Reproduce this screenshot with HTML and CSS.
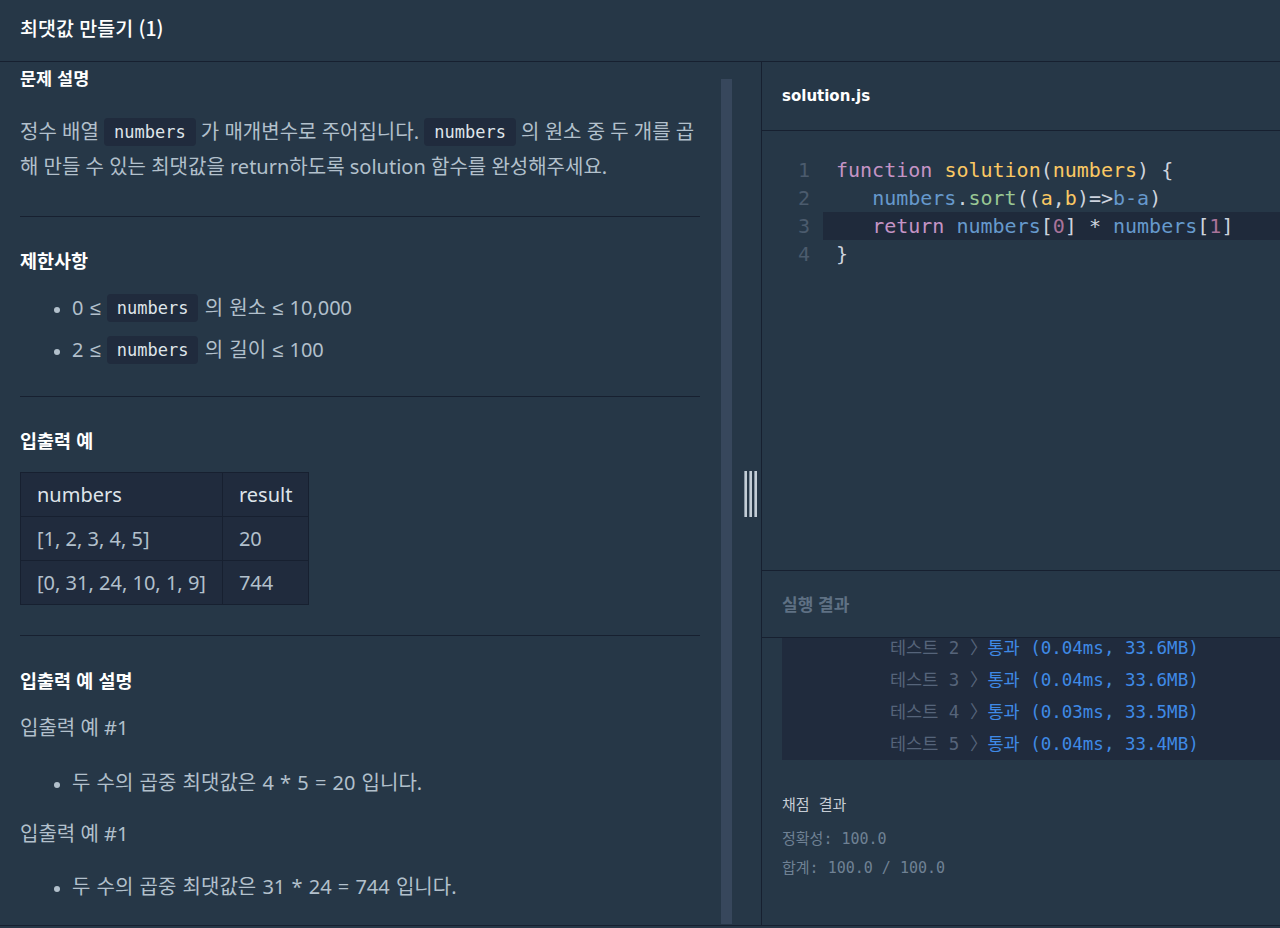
FILE: index.html
```html
<!DOCTYPE html>
<html lang="ko">
<head>
<meta charset="utf-8">
<title>최댓값 만들기 (1)</title>
<link rel="stylesheet" href="styles.css">
</head>
<body>
<header class="topbar">
  <h1 class="title">최댓값 만들기 (1)</h1>
</header>
<main class="workspace">
  <section class="left">
    <div class="desc">
      <h2 class="panel-title">문제 설명</h2>
      <p class="para">정수 배열 <code class="ic">numbers</code> 가 매개변수로 주어집니다. <code class="ic">numbers</code> 의 원소 중 두 개를 곱해 만들 수 있는 최댓값을 return하도록 solution 함수를 완성해주세요.</p>
      <hr class="rule rule-a">
      <h3 class="sub">제한사항</h3>
      <ul class="bullets spaced b-constraints">
        <li>0 <span class="op">≤</span> <code class="ic">numbers</code> 의 원소 <span class="op">≤</span> 10,000</li>
        <li>2 <span class="op">≤</span> <code class="ic">numbers</code> 의 길이 <span class="op">≤</span> 100</li>
      </ul>
      <hr class="rule rule-b">
      <h3 class="sub">입출력 예</h3>
      <table class="io">
        <thead>
          <tr><th>numbers</th><th>result</th></tr>
        </thead>
        <tbody>
          <tr><td>[1, 2, 3, 4, 5]</td><td>20</td></tr>
          <tr><td>[0, 31, 24, 10, 1, 9]</td><td>744</td></tr>
        </tbody>
      </table>
      <hr class="rule rule-c">
      <h3 class="sub sub-last">입출력 예 설명</h3>
      <p class="ex ex-1">입출력 예 #1</p>
      <ul class="bullets spaced b-ex1">
        <li>두 수의 곱중 최댓값은 4 * 5 = 20 입니다.</li>
      </ul>
      <p class="ex ex-2">입출력 예 #1</p>
      <ul class="bullets spaced b-ex2">
        <li>두 수의 곱중 최댓값은 31 * 24 = 744 입니다.</li>
      </ul>
    </div>
    <div class="scrollbar"><div class="thumb"></div></div>
    <div class="splitter">
      <div class="handle"><span></span><span></span><span></span></div>
    </div>
  </section>
  <section class="right">
    <div class="tab">solution.js</div>
    <div class="editor">
      <div class="nums">
        <div>1</div><div>2</div><div>3</div><div>4</div>
      </div>
      <div class="code">
        <div class="ln"><span class="kw">function</span> <span class="fn">solution</span><span class="pn">(</span><span class="pa">numbers</span><span class="pn">) {</span></div>
        <div class="ln">   <span class="vr">numbers</span><span class="pn">.</span><span class="pr">sort</span><span class="pn">((</span><span class="pa">a</span><span class="pn">,</span><span class="pa">b</span><span class="pn">)=&gt;</span><span class="vr">b-a</span><span class="pn">)</span></div>
        <div class="ln active">   <span class="kw">return</span> <span class="vr">numbers</span><span class="pn">[</span><span class="nm">0</span><span class="pn">] * </span><span class="vr">numbers</span><span class="pn">[</span><span class="nm">1</span><span class="pn">]</span></div>
        <div class="ln"><span class="pn">}</span></div>
      </div>
    </div>
    <div class="run-head">실행 결과</div>
    <div class="run-body">
      <div class="console">
        <div class="tline"><span class="tl">테스트 2 〉</span><span class="ts">통과 (0.04ms, 33.6MB)</span></div>
        <div class="tline"><span class="tl">테스트 3 〉</span><span class="ts">통과 (0.04ms, 33.6MB)</span></div>
        <div class="tline"><span class="tl">테스트 4 〉</span><span class="ts">통과 (0.03ms, 33.5MB)</span></div>
        <div class="tline"><span class="tl">테스트 5 〉</span><span class="ts">통과 (0.04ms, 33.4MB)</span></div>
      </div>
    </div>
    <div class="grade">
      <div class="grade-title">채점 결과</div>
      <div class="grade-line first">정확성: 100.0</div>
      <div class="grade-line">합계: 100.0 / 100.0</div>
    </div>
  </section>
</main>
<div class="footer"></div>
</body>
</html>
```

FILE: styles.css
```css
html, body {
  margin: 0;
  padding: 0;
}

body {
  width: 1280px;
  height: 928px;
  overflow: hidden;
  background: #263747;
  color: #b2c0cc;
  font-family: "Noto Sans", "Noto Sans CJK KR", sans-serif;
  font-size: 20px;
}

/* top bar */
.topbar {
  height: 62px;
  box-sizing: border-box;
  padding: 0 0 7px 20px;
  display: flex;
  align-items: center;
  border-bottom: 1px solid #172030;
}

.title {
  margin: 0;
  font-size: 19.5px;
  font-weight: 500;
  color: #ffffff;
  font-family: "Noto Sans CJK KR", "Noto Sans", sans-serif;
}

/* workspace */
.workspace {
  display: flex;
  height: 863px;
}

.left {
  width: 761px;
  flex: none;
  border-right: 1px solid #172030;
  display: flex;
}

.desc {
  width: 680px;
  flex: none;
  padding: 4px 20px 0;
  overflow: hidden;
}

.panel-title {
  margin: 0;
  font-size: 17.5px;
  line-height: 24px;
  font-weight: 700;
  color: #ffffff;
  font-family: "Noto Sans CJK KR", sans-serif;
}

.para {
  margin: 24px 0 0;
  line-height: 35px;
}

.ic {
  display: inline-block;
  height: 28px;
  line-height: 28px;
  padding: 0 10px;
  border-radius: 4px;
  background: #202b3d;
  color: #dfe5ea;
  font-family: "DejaVu Sans Mono", monospace;
  font-size: 17px;
  word-spacing: 0;
  vertical-align: middle;
  position: relative;
  top: -2px;
}

.op {
  font-family: "Liberation Sans", sans-serif;
}

.rule {
  border: 0;
  border-top: 1px solid #172030;
  margin: 0;
}
.rule-a { margin-top: 32px; }
.rule-b { margin-top: 25px; }
.rule-c { margin-top: 30px; }

.sub {
  margin: 31px 0 0;
  font-size: 18.5px;
  line-height: 24px;
  font-weight: 700;
  color: #ffffff;
  font-family: "Noto Sans CJK KR", sans-serif;
}
.sub-last { margin-top: 32px; }

.bullets {
  list-style: none;
  margin: 0;
  padding: 0 0 0 34px;
}
.bullets li {
  line-height: 42px;
}
.bullets.spaced li {
  word-spacing: 1px;
}
.bullets li::before {
  content: "";
  display: inline-block;
  width: 6px;
  height: 6px;
  border-radius: 50%;
  background: #b2c0cc;
  margin-right: 12px;
  vertical-align: middle;
}
.b-constraints { margin-top: 15px; }
.b-ex1 { margin-top: 17px; }
.b-ex2 { margin-top: 15px; }

.io {
  margin-top: 20px;
  border-collapse: collapse;
  background: #202b3d;
}
.io th, .io td {
  border: 1px solid #172030;
  height: 44px;
  padding: 0 16px;
  text-align: left;
  font-weight: 400;
  box-sizing: border-box;
}
.io th { color: #dee4ea; }
.io td { color: #b2c0cc; }

.ex {
  margin: 0;
  line-height: 35px;
}
.ex-1 { margin-top: 18px; }
.ex-2 { margin-top: 12px; }

.scrollbar {
  width: 11px;
  margin-left: 1px;
  padding-top: 17px;
  flex: none;
}
.thumb {
  height: 845px;
  background: #37475c;
}

.splitter {
  flex: 1;
  display: flex;
  align-items: center;
  padding-left: 12px;
}
.handle {
  display: flex;
  gap: 2px;
}
.handle span {
  width: 3px;
  height: 46px;
  box-sizing: border-box;
  background: #c3cdd6;
  border-left: 1px solid #8795a3;
}

/* right side */
.right {
  flex: 1;
  display: flex;
  flex-direction: column;
}

.tab {
  height: 68px;
  flex: none;
  border-bottom: 1px solid #172030;
  display: flex;
  align-items: center;
  padding-left: 20px;
  font-family: "DejaVu Sans", sans-serif;
  font-size: 15px;
  font-weight: 700;
  color: #ffffff;
}

.editor {
  height: 440px;
  flex: none;
  box-sizing: border-box;
  padding-top: 25px;
  border-bottom: 1px solid #172030;
  display: flex;
  font-family: "DejaVu Sans Mono", monospace;
  font-size: 20px;
  line-height: 28px;
}
.nums {
  width: 61px;
  box-sizing: border-box;
  padding-right: 13px;
  text-align: right;
  color: #4b5b6d;
}
.code {
  flex: 1;
}
.ln {
  white-space: pre;
  padding-left: 13px;
  color: #cdd3de;
}
.ln.active {
  background: #1f2a3b;
}
.kw { color: #c594c5; }
.fn { color: #fac863; }
.pa { color: #fac863; }
.vr { color: #6699cc; }
.pr { color: #99c794; }
.pn { color: #cdd3de; }
.nm { color: #a9739a; }

.run-head {
  height: 67px;
  flex: none;
  border-bottom: 1px solid #172030;
  display: flex;
  align-items: center;
  padding: 0 0 2px 20px;
  box-sizing: border-box;
  font-family: "Noto Sans CJK KR", sans-serif;
  font-size: 17px;
  font-weight: 700;
  color: #5f7184;
}

.run-body {
  height: 122px;
  flex: none;
  padding-left: 20px;
  display: flex;
}
.console {
  flex: 1;
  background: #202b3d;
  overflow: hidden;
  padding-left: 108px;
  font-family: "DejaVu Sans Mono", "Noto Sans CJK KR", monospace;
  font-size: 17.5px;
}
.tline {
  white-space: pre;
  height: 32px;
  line-height: 20px;
}
.tl { color: #56647a; }
.ts { color: #3f8ae6; }

.grade {
  flex: 1;
  padding: 30px 20px 0;
  font-family: "DejaVu Sans Mono", "Noto Sans CJK KR", monospace;
  font-size: 15px;
}
.grade-title {
  line-height: 30px;
  color: #c6cdd5;
}
.grade-line {
  line-height: 29px;
  color: #6f8194;
}
.grade-line.first { margin-top: 5px; }

.footer {
  border-top: 1px solid #172030;
  height: 2px;
}
```
